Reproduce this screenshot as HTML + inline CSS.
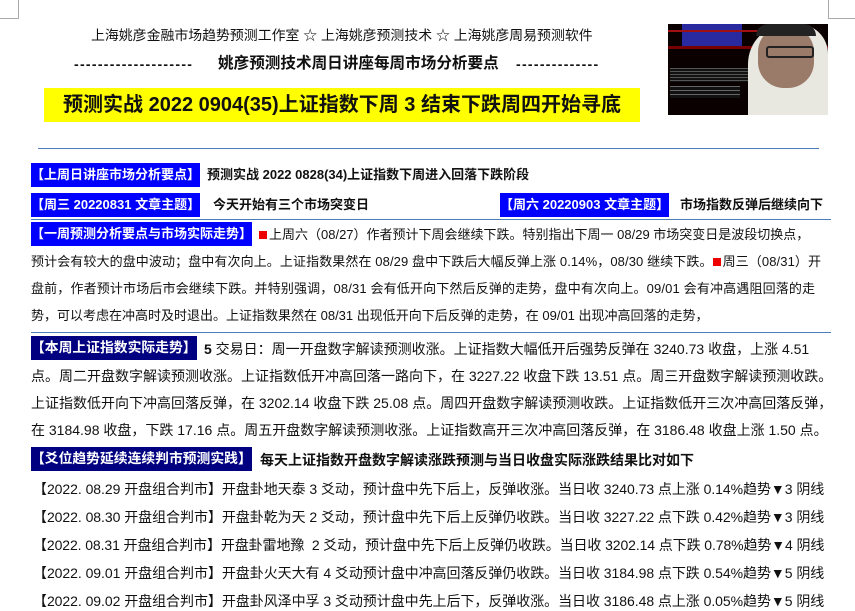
<!DOCTYPE html>
<html><head><meta charset="utf-8"><style>
body{margin:0;width:855px;height:610px;background:#fff;overflow:hidden;position:relative;font-family:"Liberation Sans","Noto Sans CJK SC",sans-serif;color:#111;}
.a{position:absolute;white-space:nowrap;}
.t{font-size:13px;line-height:20px;}
.t2{font-size:14px;line-height:20px;}
.lb{position:absolute;color:#fff;font-weight:bold;font-size:13px;line-height:24px;padding:0;background:#0000ff;white-space:nowrap;}
.nv{background:#000080;font-size:13.8px;}
.hl{position:absolute;height:1px;background:#4a7ebb;}
.b{font-weight:bold;}
.sq{display:inline-block;width:8px;height:8px;background:#e00;margin-right:2px;vertical-align:0;}
</style></head><body>
<div class="a" style="left:0;top:0;width:18px;height:18px;border-right:1px solid #aaa;border-bottom:1px solid #aaa"></div>
<div class="a" style="left:828px;top:0;width:27px;height:18px;border-left:1px solid #aaa;border-bottom:1px solid #aaa"></div>

<div class="a" style="left:91px;top:26px;font-size:13.9px;line-height:18px">上海姚彦金融市场趋势预测工作室 ☆ 上海姚彦预测技术 ☆ 上海姚彦周易预测软件</div>
<div class="a b" style="left:74px;top:55px;font-size:14px;line-height:18px;letter-spacing:1.3px">--------------------</div>
<div class="a b" style="left:218px;top:55px;font-size:15.6px;line-height:18px">姚彦预测技术周日讲座每周市场分析要点</div>
<div class="a b" style="left:516px;top:55px;font-size:14px;line-height:18px;letter-spacing:1.3px">--------------</div>
<div class="a b" style="left:44px;top:88px;width:596px;height:34px;background:#ffff00;font-size:20px;line-height:34px;text-align:center">预测实战 2022 0904(35)上证指数下周 3 结束下跌周四开始寻底</div>

<div class="a" style="left:668px;top:24px;width:160px;height:91px;background:#0a0000;overflow:hidden">
 <div class="a" style="left:14px;top:0;width:60px;height:22px;background:#2a2aa0"></div>
 <div class="a" style="left:0;top:6px;width:100px;height:2px;background:#a01010"></div>
 <div class="a" style="left:0;top:22px;width:160px;height:3px;background:#700"></div>
 <div class="a" style="left:2px;top:44px;width:80px;height:14px;background:repeating-linear-gradient(#555 0 1px,#111 1px 3px)"></div>
 <div class="a" style="left:2px;top:62px;width:70px;height:12px;background:repeating-linear-gradient(#666 0 1px,#111 1px 4px)"></div>
 <div class="a" style="left:80px;top:0;width:80px;height:91px;background:#e8e8e0;border-radius:40px 30px 0 0"></div>
 <div class="a" style="left:90px;top:2px;width:56px;height:62px;background:#9a7a68;border-radius:26px"></div>
 <div class="a" style="left:88px;top:0;width:60px;height:12px;background:#222;border-radius:20px 20px 0 0"></div>
 <div class="a" style="left:98px;top:22px;width:44px;height:8px;border:2px solid #222;border-radius:3px"></div>
</div>

<div class="hl" style="left:38px;top:148px;width:781px"></div>

<div class="lb" style="left:31px;top:163px">【上周日讲座市场分析要点】</div>
<div class="a t b" style="left:207px;top:165px">预测实战 2022 0828(34)上证指数下周进入回落下跌阶段</div>

<div class="lb" style="left:31px;top:193px">【周三 20220831 文章主题】</div>
<div class="a t b" style="left:213px;top:195px">今天开始有三个市场突变日</div>
<div class="lb" style="left:500px;top:193px">【周六 20220903 文章主题】</div>
<div class="a t b" style="left:680px;top:195px">市场指数反弹后继续向下</div>

<div class="hl" style="left:31px;top:219px;width:800px"></div>

<div class="lb" style="left:31px;top:222px">【一周预测分析要点与市场实际走势】</div>
<div class="a t" style="left:259px;top:225px"><span class="sq"></span>上周六（08/27）作者预计下周会继续下跌。特别指出下周一 08/29 市场突变日是波段切换点，</div>
<div class="a t" style="left:31px;top:252px;letter-spacing:0.1px">预计会有较大的盘中波动；盘中有次向上。上证指数果然在 08/29 盘中下跌后大幅反弹上涨 0.14%，08/30 继续下跌。<span class="sq"></span>周三（08/31）开</div>
<div class="a t" style="left:31px;top:279px;letter-spacing:0.15px">盘前，作者预计市场后市会继续下跌。并特别强调，08/31 会有低开向下然后反弹的走势，盘中有次向上。09/01 会有冲高遇阻回落的走</div>
<div class="a t" style="left:31px;top:306px">势，可以考虑在冲高时及时退出。上证指数果然在 08/31 出现低开向下后反弹的走势，在 09/01 出现冲高回落的走势，</div>

<div class="hl" style="left:31px;top:332px;width:800px"></div>

<div class="lb nv" style="left:31px;top:336px">【本周上证指数实际走势】</div>
<div class="a t2" style="left:204px;top:339px"><b>5</b> 交易日：周一开盘数字解读预测收涨。上证指数大幅低开后强势反弹在 3240.73 收盘，上涨 4.51</div>
<div class="a t2" style="left:31px;top:366px">点。周二开盘数字解读预测收涨。上证指数低开冲高回落一路向下，在 3227.22 收盘下跌 13.51 点。周三开盘数字解读预测收跌。</div>
<div class="a t2" style="left:31px;top:393px">上证指数低开向下冲高回落反弹，在 3202.14 收盘下跌 25.08 点。周四开盘数字解读预测收跌。上证指数低开三次冲高回落反弹，</div>
<div class="a t2" style="left:31px;top:420px">在 3184.98 收盘，下跌 17.16 点。周五开盘数字解读预测收涨。上证指数高开三次冲高回落反弹，在 3186.48 收盘上涨 1.50 点。</div>

<div class="lb nv" style="left:31px;top:447px">【爻位趋势延续连续判市预测实践】</div>
<div class="a t2 b" style="left:260px;top:450px">每天上证指数开盘数字解读涨跌预测与当日收盘实际涨跌结果比对如下</div>

<div class="a t2" style="left:33px;top:479px;letter-spacing:-0.05px">【2022. 08.29 开盘组合判市】开盘卦地天泰 3 爻动，预计盘中先下后上，反弹收涨。当日收 3240.73 点上涨 0.14%趋势▼3 阴线</div>
<div class="a t2" style="left:33px;top:507px;letter-spacing:-0.05px">【2022. 08.30 开盘组合判市】开盘卦乾为天 2 爻动，预计盘中先下后上反弹仍收跌。当日收 3227.22 点下跌 0.42%趋势▼3 阴线</div>
<div class="a t2" style="left:33px;top:535px;letter-spacing:-0.1px">【2022. 08.31 开盘组合判市】开盘卦雷地豫 &nbsp;2 爻动，预计盘中先下后上反弹仍收跌。当日收 3202.14 点下跌 0.78%趋势▼4 阴线</div>
<div class="a t2" style="left:33px;top:563px;letter-spacing:-0.05px">【2022. 09.01 开盘组合判市】开盘卦火天大有 4 爻动预计盘中冲高回落反弹仍收跌。当日收 3184.98 点下跌 0.54%趋势▼5 阴线</div>
<div class="a t2" style="left:33px;top:591px;letter-spacing:-0.05px">【2022. 09.02 开盘组合判市】开盘卦风泽中孚 3 爻动预计盘中先上后下，反弹收涨。当日收 3186.48 点上涨 0.05%趋势▼5 阴线</div>
</body></html>
